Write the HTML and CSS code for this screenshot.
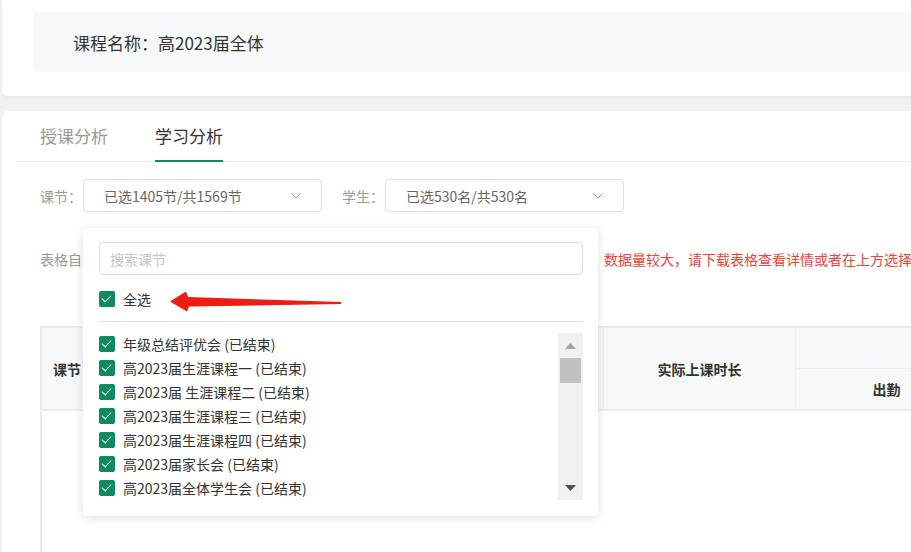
FILE: index.html
```html
<!DOCTYPE html>
<html lang="zh-CN">
<head>
<meta charset="utf-8">
<title>学习分析</title>
<link rel="stylesheet" href="styles.css">
</head>
<body>
<div class="page">
  <section class="card info-card">
    <div class="info-box">课程名称：高2023届全体</div>
  </section>

  <section class="card main-card">
    <div class="tabs">
      <div class="tab">授课分析</div>
      <div class="tab active">学习分析</div>
    </div>

    <div class="content">
      <div class="filters">
        <span class="f-label">课节：</span>
        <div class="select">
          <span>已选1405节/共1569节</span>
          <svg class="chev" width="10" height="6" viewBox="0 0 10 6"><path d="M0.5 0.5 L5 5 L9.5 0.5" fill="none" stroke="#9a9a9a" stroke-width="1"/></svg>
        </div>
        <span class="f-label second">学生：</span>
        <div class="select">
          <span>已选530名/共530名</span>
          <svg class="chev" width="10" height="6" viewBox="0 0 10 6"><path d="M0.5 0.5 L5 5 L9.5 0.5" fill="none" stroke="#9a9a9a" stroke-width="1"/></svg>
        </div>

        <div class="popup">
          <input class="search" type="text" placeholder="搜索课节">
          <div class="all-row">
            <span class="cb"></span><span class="cb-text">全选</span>
          </div>
          <div class="divider"></div>
          <div class="list-wrap">
            <div class="list">
              <div class="item"><span class="cb"></span><span>年级总结评优会 (已结束)</span></div>
              <div class="item"><span class="cb"></span><span>高2023届生涯课程一 (已结束)</span></div>
              <div class="item"><span class="cb"></span><span>高2023届 生涯课程二 (已结束)</span></div>
              <div class="item"><span class="cb"></span><span>高2023届生涯课程三 (已结束)</span></div>
              <div class="item"><span class="cb"></span><span>高2023届生涯课程四 (已结束)</span></div>
              <div class="item"><span class="cb"></span><span>高2023届家长会 (已结束)</span></div>
              <div class="item"><span class="cb"></span><span>高2023届全体学生会 (已结束)</span></div>
            </div>
            <div class="scrollbar">
              <svg class="sb-svg" width="25" height="167" viewBox="0 0 25 167">
                <path d="M7 16 L18 16 L12.5 10 Z" fill="#a3a3a3"/>
                <rect x="2" y="25" width="21" height="25" fill="#c1c1c1"/>
                <path d="M7 152 L18 152 L12.5 158 Z" fill="#505050"/>
              </svg>
            </div>
          </div>
          <svg class="red-arrow" width="270" height="100" viewBox="0 0 270 100">
            <path d="M87 73.5 L103 63.5 L105 69 L258 74 L258 76 L106 78.5 L104 83.5 Z" fill="#ee1d12"/>
          </svg>
        </div>
      </div>

      <div class="notice">
        <span class="notice-gray">表格自动汇总所选课节及学生的学习数据，</span><span class="notice-red">数据量较大，请下载表格查看详情或者在上方选择部分课节或学生</span>
      </div>

      <table class="data-table">
        <colgroup>
          <col class="w1"><col class="w2"><col class="w3"><col class="w4"><col class="w5"><col class="w6">
        </colgroup>
        <thead>
          <tr>
            <th rowspan="2" class="th-left">课节</th>
            <th rowspan="2"></th>
            <th rowspan="2"></th>
            <th rowspan="2">实际上课时长</th>
            <th colspan="2" class="th-group"></th>
          </tr>
          <tr>
            <th class="th-sub">出勤</th>
            <th class="th-sub"></th>
          </tr>
        </thead>
        <tbody>
          <tr class="empty-row"><td colspan="6"></td></tr>
        </tbody>
      </table>
    </div>
  </section>
</div>
</body>
</html>
```

FILE: styles.css
```css
html, body {
  margin: 0;
  padding: 0;
}

body {
  width: 911px;
  height: 552px;
  overflow: hidden;
  background: #f0f1f3;
  font-family: "Noto Sans CJK SC", "Noto Sans", "Liberation Sans", sans-serif;
  color: #333;
}

.page {
  width: 1200px;
  padding-left: 2px;
}

.card {
  background: #fff;
}

.info-card {
  padding: 12px 32px 24px 32px;
  border-radius: 0 0 0 6px;
  box-shadow: 0 2px 4px rgba(0, 0, 0, 0.04);
}

.info-box {
  height: 60px;
  background: #f7f8fa;
  border-radius: 4px;
  padding-left: 39px;
  display: flex;
  align-items: center;
  font-size: 17px;
  color: #333;
}

.main-card {
  margin-top: 15px;
  height: 441px;
  border-radius: 6px 0 0 0;
  padding-left: 14px;
}

.tabs {
  display: flex;
  gap: 47px;
  padding-left: 24px;
  height: 50px;
  border-bottom: 1px solid #e8eaee;
}

.tab {
  position: relative;
  font-size: 17px;
  line-height: 22px;
  padding-top: 14px;
  color: #999;
}

.tab.active {
  color: #333;
}

.tab.active::after {
  content: "";
  position: absolute;
  left: 0;
  right: 0;
  bottom: -1px;
  height: 2px;
  background: #0f8a5f;
}

.content {
  padding-left: 24px;
}

.filters {
  position: relative;
  display: flex;
  align-items: center;
  margin-top: 17px;
  height: 33px;
}

.f-label {
  width: 43px;
  font-size: 14px;
  line-height: 20px;
  color: #999;
}

.f-label.second {
  margin-left: 20px;
}

.select {
  width: 239px;
  height: 33px;
  box-sizing: border-box;
  border: 1px solid #dcdfe6;
  border-radius: 4px;
  padding: 0 20px;
  display: flex;
  align-items: center;
  justify-content: space-between;
  font-size: 14px;
  color: #666;
}

.chev {
  display: block;
}

.popup {
  position: absolute;
  left: 43px;
  top: 49px;
  width: 515px;
  height: 288px;
  box-sizing: border-box;
  padding: 14px 15px 16px 16px;
  background: #fff;
  border-radius: 4px;
  box-shadow: 0 2px 12px rgba(0, 0, 0, 0.12);
  z-index: 10;
}

.search {
  display: block;
  width: 100%;
  height: 33px;
  box-sizing: border-box;
  margin: 0;
  border: 1px solid #dcdfe6;
  border-radius: 4px;
  padding: 0 10px;
  font-family: inherit;
  font-size: 14px;
  color: #333;
  outline: none;
  background: #fff;
}

.search::placeholder {
  color: #c0c4cc;
}

.all-row {
  margin-top: 12px;
  height: 24px;
  display: flex;
  align-items: center;
  gap: 8px;
  font-size: 14px;
  color: #333;
}

.cb {
  position: relative;
  flex: none;
  width: 16px;
  height: 16px;
  border-radius: 2px;
  background: #0f8a5f;
}

.cb::after {
  content: "";
  position: absolute;
  left: 5px;
  top: 2px;
  width: 4px;
  height: 8px;
  border: solid #fff;
  border-width: 0 1px 1px 0;
  transform: rotate(45deg);
}

.divider {
  margin-top: 10px;
  height: 1px;
  background: #dcdfe6;
}

.list-wrap {
  margin-top: 10px;
  height: 168px;
  display: flex;
}

.list {
  flex: 1;
}

.item {
  height: 24px;
  display: flex;
  align-items: center;
  gap: 8px;
  font-size: 14px;
  color: #333;
  white-space: nowrap;
}

.scrollbar {
  width: 25px;
  height: 167px;
  margin-top: 1px;
  background: #f1f1f1;
}

.sb-svg {
  display: block;
}

.red-arrow {
  position: absolute;
  left: 0;
  top: 0;
  pointer-events: none;
}

.notice {
  margin-top: 37px;
  height: 20px;
  font-size: 14px;
  line-height: 20px;
  white-space: nowrap;
}

.notice-gray {
  display: inline-block;
  width: 564px;
  overflow: hidden;
  vertical-align: top;
  color: #999;
}

.notice-red {
  color: #f0403c;
}

.data-table {
  margin-top: 57px;
  width: 1118px;
  table-layout: fixed;
  border-collapse: separate;
  border-spacing: 0;
  border-top: 2px solid #e9eaee;
  border-left: 2px solid #e9eaee;
}

.w1 { width: 160px; }
.w2 { width: 200px; }
.w3 { width: 202px; }
.w4 { width: 192px; }
.w5 { width: 182px; }
.w6 { width: 182px; }

.data-table th {
  height: 40px;
  padding: 0;
  background: #f7f8fa;
  border-right: 1px solid #ebeef5;
  font-size: 14px;
  font-weight: 600;
  color: #333;
  text-align: center;
  border-bottom: 2px solid #e9eaee;
}

.data-table th.th-left {
  text-align: left;
  padding-left: 11px;
}

.data-table th.th-group {
  border-bottom: 1px solid #ebeef5;
  height: 40px;
}

.data-table th.th-sub {
  height: 40px;
}

.empty-row td {
  height: 150px;
  padding: 0;
  background: #fff;
}
```
